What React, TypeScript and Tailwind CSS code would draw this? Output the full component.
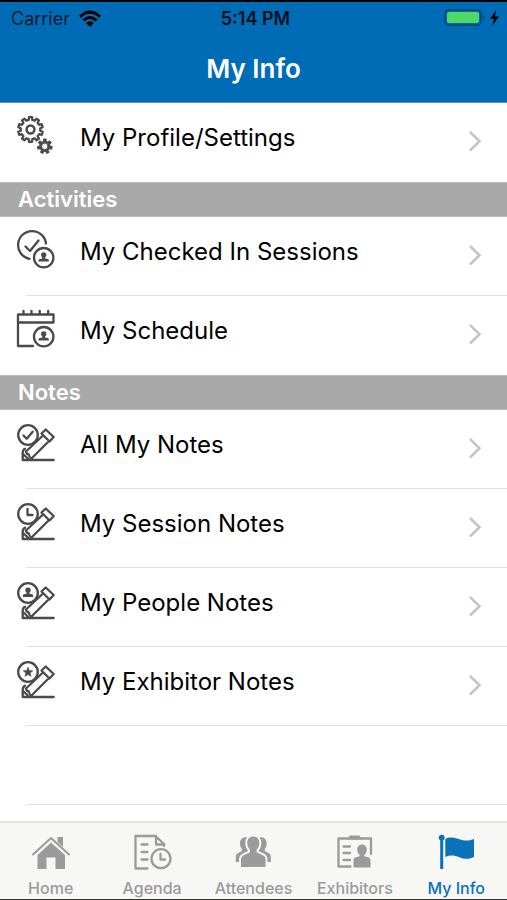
import type { ReactNode } from "react";

const stroke = {
  fill: "none",
  stroke: "currentColor",
  strokeWidth: 2.3,
  strokeLinejoin: "round" as const,
  strokeLinecap: "round" as const,
};

function gearPath(cx: number, cy: number, outer: number, inner: number, teeth: number) {
  const points: string[] = [];
  const step = (Math.PI * 2) / teeth;
  for (let i = 0; i < teeth; i++) {
    const a = i * step - Math.PI / 2;
    const corners: [number, number][] = [
      [-0.29, inner],
      [-0.2, outer],
      [0.2, outer],
      [0.29, inner],
    ];
    for (const [offset, r] of corners) {
      const t = a + offset * step;
      points.push(`${(cx + r * Math.cos(t)).toFixed(2)} ${(cy + r * Math.sin(t)).toFixed(2)}`);
    }
  }
  return `M${points.join("L")}Z`;
}

function Icon({ children }: { children: ReactNode }) {
  return (
    <svg viewBox="0 0 40 40" className="size-10 shrink-0" aria-hidden="true">
      <g {...stroke}>{children}</g>
    </svg>
  );
}

function Bust({ x, y }: { x: number; y: number }) {
  return (
    <path
      transform={`translate(${x} ${y})`}
      fill="currentColor"
      stroke="none"
      d="M0-5.500a2.700 2.700 0 0 1 2.700 2.700c0 1.300-.6 2-1.300 2.600v.9l2.600.6c.8.300 1.200.8 1.200 1.600v1H-5.200v-1c0-.8.400-1.300 1.200-1.600l2.600-.6v-.9c-.7-.6-1.300-1.300-1.300-2.600A2.700 2.700 0 0 1 0-5.500Z"
    />
  );
}

function GearsIcon() {
  return (
    <Icon>
      <path d={gearPath(14.5, 14.5, 12.4, 9.8, 10)} strokeWidth="2.3" />
      <circle cx="14.5" cy="14.5" r="3.9" strokeWidth="2.5" />
      <path
        d={`${gearPath(28.8, 31.3, 7.5, 5.3, 7)}M32 31.300a3.200 3.200 0 1 0-6.400 0a3.200 3.200 0 1 0 6.400 0Z`}
        fill="currentColor"
        fillRule="evenodd"
        strokeWidth="0.9"
      />
    </Icon>
  );
}

function CheckedInIcon() {
  return (
    <Icon>
      <path d="M30 14.500A14 14 0 1 0 13.500 29.800" />
      <path d="m9.500 17.500 4.500 4.500 8.500-10.500" />
      <circle cx="27.700" cy="28.700" r="9.700" />
      <Bust x={27.7} y={28.7} />
    </Icon>
  );
}

function ScheduleIcon() {
  return (
    <Icon>
      <path d="M2 6.500h35.500v8H2zM2 14.500v23.500h15M7.500 3v3M15.500 3v3M23.700 3v3M32.200 3v3" />
      <circle cx="27.700" cy="28.700" r="9.700" />
      <Bust x={27.7} y={28.7} />
    </Icon>
  );
}

function NoteIcon({ children }: { children: ReactNode }) {
  return (
    <Icon>
      <circle cx="12" cy="13" r="9.800" />
      {children}
      <path d="m29.700 7.500 8 7.500-4.200 4.500-8-8zM27 13.500 10 29.500M32.500 19.500 15.500 36.500M9 26.800c-1.600.8-2.300 2.200-2.300 4V38h31M10 29.500c.3 2 1 2.800 2.800 3 .2 2 1 3.200 2.700 4M7.500 32.500l5.500 5" />
    </Icon>
  );
}

const star = "m12 8.200 1.400 3.200 3.500.300-2.700 2.300.9 3.400-3.100-1.800-3.100 1.800.9-3.400-2.700-2.300 3.500-.300z";

type Item = { label: string; icon: ReactNode };
type Group = { title?: string; items: Item[] };

const groups: Group[] = [
  { items: [{ label: "My Profile/Settings", icon: <GearsIcon /> }] },
  {
    title: "Activities",
    items: [
      { label: "My Checked In Sessions", icon: <CheckedInIcon /> },
      { label: "My Schedule", icon: <ScheduleIcon /> },
    ],
  },
  {
    title: "Notes",
    items: [
      { label: "All My Notes", icon: <NoteIcon><path d="m7.500 13.500 3.200 3.200 6-7" /></NoteIcon> },
      { label: "My Session Notes", icon: <NoteIcon><path d="M11.500 8v6h5" /></NoteIcon> },
      { label: "My People Notes", icon: <NoteIcon><Bust x={12} y={13} /></NoteIcon> },
      { label: "My Exhibitor Notes", icon: <NoteIcon><path d={star} fill="currentColor" strokeWidth="0.5" /></NoteIcon> },
    ],
  },
];

function Row({ item, divider }: { item: Item; divider: boolean }) {
  return (
    <li>
      <button type="button" className="flex h-[79px] w-full flex-col text-left">
        <span className="flex w-full flex-1 items-start pt-3 pr-[25px] pl-4">
          <span className="text-[#4a4a4a]">{item.icon}</span>
          <span className="ml-6 flex-1 pt-1 text-2xl leading-[38px] text-black">{item.label}</span>
          <svg viewBox="0 0 14 22" className="mt-[15px] h-[22px] w-[14px] text-[#c4c4c6]" aria-hidden="true">
            <path d="m2 2 9.500 9.200L2 20.500" fill="none" stroke="currentColor" strokeWidth="2.500" />
          </svg>
        </span>
        {divider && <span className="ml-[26px] h-px self-stretch bg-[#e2e2e2]" />}
      </button>
    </li>
  );
}

const sidePerson =
  "M12.500 5.300c3.200 0 5.300 2.400 5.300 5.700 0 2.400-1 4.500-2.300 5.700v2l5 3V30H2.800v-5c0-1.900.7-3.100 2.300-4l3.700-2v-2.300c-1.200-1.200-1.800-3.100-1.800-5.500 0-3.300 2.100-5.900 5.500-5.900Z";

const tabs: Item[] = [
  {
    label: "Home",
    icon: (
      <Icon>
        <path d="M2 22.500 20 6l18 16.500" strokeWidth="2" />
        <path stroke="none" fill="currentColor" d="M26.500 5H32v10l-5.500-5zM20 10.500 34 23v14h-9.500V25.500h-9V37H6.500V23z" />
      </Icon>
    ),
  },
  {
    label: "Agenda",
    icon: (
      <Icon>
        <path d="M15.500 36.500h-12V4h20l9 8.500H24V4M32 12.500v1.500M9.500 12.500h6M9.500 20h6M9.500 27.500h6" />
        <circle cx="29" cy="26.700" r="9.500" />
        <path d="M28.500 22v5.500h4.500" />
      </Icon>
    ),
  },
  {
    label: "Attendees",
    icon: (
      <Icon>
        <g fill="currentColor" stroke="none">
          <path d={sidePerson} />
          <path d={sidePerson} transform="matrix(-1 0 0 1 40.600 0)" />
        </g>
        <path
          stroke="#f7f7f6"
          strokeWidth="4"
          fill="currentColor"
          paintOrder="stroke"
          d="M20.300 4.500c3.800 0 6 2.700 6 6.500 0 3-1.200 5.300-2.700 6.800v2.400l6.200 3c2 1 2.700 2.300 2.700 4.500V35H8v-7.300c0-2.200.8-3.500 2.800-4.500l6.200-3v-2.400c-1.500-1.500-2.700-3.800-2.700-6.800 0-3.800 2.200-6.500 6-6.500Z"
        />
      </Icon>
    ),
  },
  {
    label: "Exhibitors",
    icon: (
      <Icon>
        <path d="M15.500 34.500H3.500V6.500h32.500V22M8.500 14.500H15M8.500 21H15M8.500 28H15" />
        <path stroke="none" fill="currentColor" d="M14.500 3.500h10l2 4h-14zM27 12.500c3 0 4.800 2.200 4.800 5 0 2.500-1 4.200-2.500 5.500v1.200l4 1.100c1.500.7 2.200 1.700 2.200 3.200v7H18.500v-7c0-1.500.7-2.500 2.200-3.200l4-1.100V23c-1.500-1.300-2.500-3-2.500-5.500 0-2.800 1.800-5 4.800-5Z" />
      </Icon>
    ),
  },
  {
    label: "My Info",
    icon: (
      <Icon>
        <path stroke="none" fill="currentColor" d="M4.200 8.300a3 3 0 1 1 3 0V37h-3zM9.300 7c4-2 8-1.800 14 .3 5.500 1.900 9.500 1.700 14.700-.3v18c-5.500 2.500-9.500 2.300-14.500.3-5.500-2.200-9.500-2.300-14.200-.3z" />
      </Icon>
    ),
  },
];

export default function App() {
  return (
    <div className="flex min-h-screen flex-col border-y border-t-2 border-b-[#333] border-t-black bg-white font-['Inter','Liberation_Sans',sans-serif]">
      <header className="h-[101px] border-b border-[#4b93c8] bg-[#006cb5]">
        <div className="grid h-[34px] grid-cols-3 items-center pr-[7px] pl-[11px] text-lg text-[#001a33]">
          <span className="flex items-center gap-2">
            Carrier
            <svg viewBox="0 0 24 18" className="h-[18px] w-6 text-black" aria-hidden="true">
              <path d="M2 6.800Q12-2.500 22 6.800M5.500 10.500Q12 4.500 18.500 10.500" fill="none" stroke="currentColor" strokeWidth="3" />
              <path d="M8 13q4-3.500 8 0l-4 4z" fill="currentColor" />
            </svg>
          </span>
          <time className="text-center font-semibold whitespace-nowrap text-[#00101f]">5:14 PM</time>
          <svg viewBox="0 0 58 20" className="h-5 w-[58px] justify-self-end" aria-hidden="true">
            <rect x="3" y="1" width="36" height="15" rx="4" fill="none" stroke="#004c82" strokeWidth="2" />
            <rect x="5" y="3" width="32" height="11" rx="2" fill="#4cd964" />
            <path d="M41 6q3 2.500 0 5z" fill="#004c82" />
            <path d="m54 1-6 9h4l-2 7 7-9.500h-4z" fill="#000" />
          </svg>
        </div>
        <h1 className="pt-[15px] text-center text-[26px] leading-9 font-semibold text-white">My Info</h1>
      </header>
      <main className="flex-1">
        {groups.map((group, g) => (
          <section key={g}>
            {group.title && (
              <h2 className="h-[35px] border-y border-[#bdbdbd] bg-[#a9a9a9] pl-[18px] text-[22px] leading-[33px] font-semibold text-white">
                {group.title}
              </h2>
            )}
            <ul>
              {group.items.map((item, i) => (
                <Row
                  key={item.label}
                  item={item}
                  divider={i < group.items.length - 1 || g === groups.length - 1}
                />
              ))}
            </ul>
          </section>
        ))}
        <div className="ml-[26px] h-[79px] border-b border-[#e2e2e2]" />
      </main>
      <nav className="grid h-[78px] grid-cols-5 border-t-2 border-[#e4e4e4] bg-[#f7f7f6]">
        {tabs.map((tab) => (
          <button
            key={tab.label}
            type="button"
            aria-current={tab.label === "My Info" ? "page" : undefined}
            className="flex flex-col items-center pt-[9px] text-[#9b9b9b] aria-[current=page]:text-[#0a72b8]"
          >
            {tab.icon}
            <span className="pt-[6px] text-base leading-5 font-medium">{tab.label}</span>
          </button>
        ))}
      </nav>
    </div>
  );
}
